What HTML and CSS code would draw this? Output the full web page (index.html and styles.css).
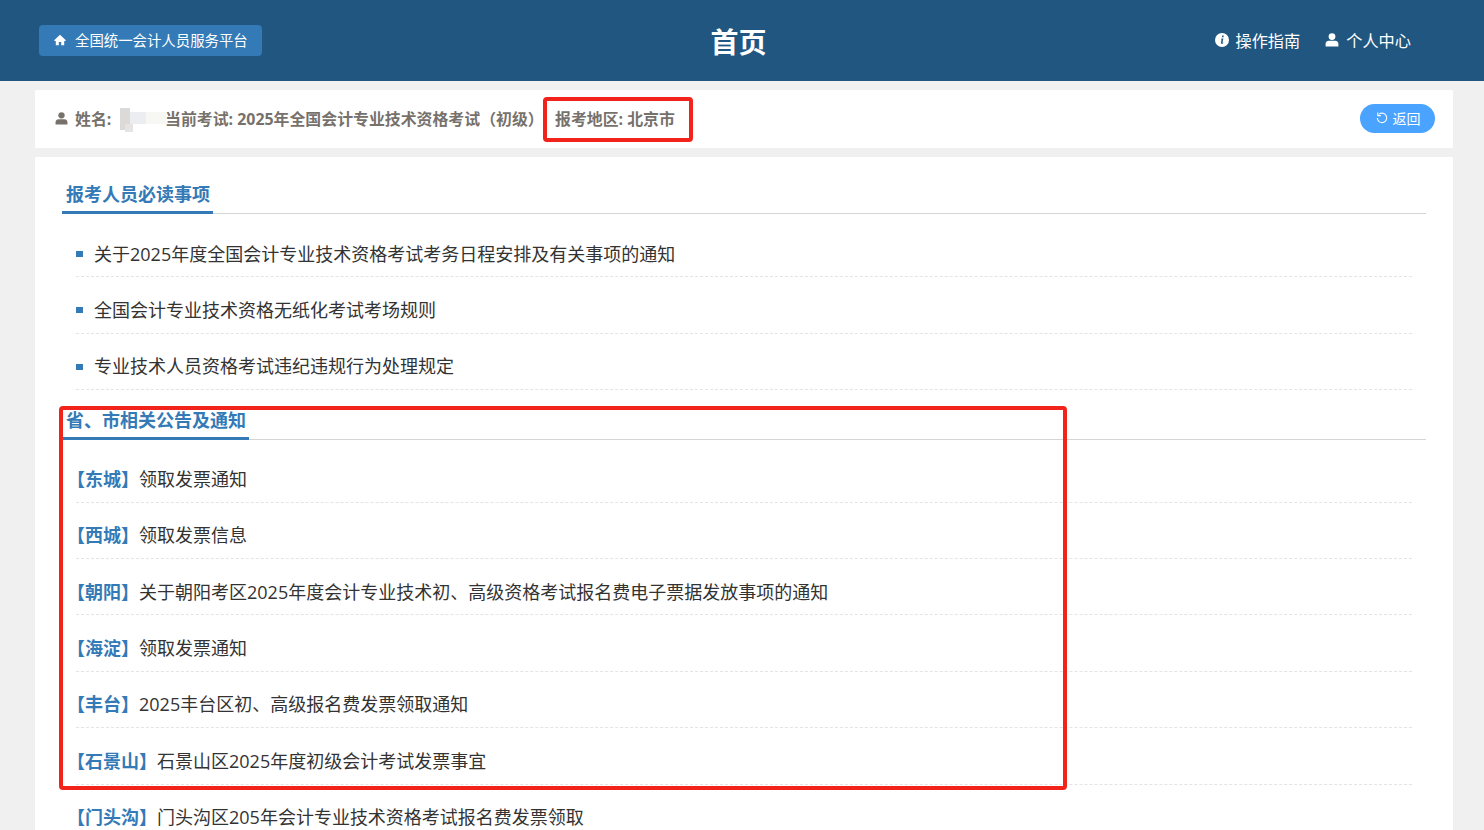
FILE: index.html
```html
<!DOCTYPE html>
<html lang="zh-CN">
<head>
<meta charset="utf-8">
<title>首页</title>
<link rel="stylesheet" href="styles.css">
</head>
<body>
<header class="topbar">
  <a class="home-btn">
    <svg class="icon-home" viewBox="0 0 12 12"><path d="M6 .8 .4 6v1h1.400v4.200h3V8h2.400v3.200h3V7h1.400V6z" fill="#fff"/></svg>
    <span>全国统一会计人员服务平台</span>
  </a>
  <h1 class="page-title">首页</h1>
  <nav class="topnav">
    <a class="nav-item">
      <svg class="icon-info" viewBox="0 0 14 14"><circle cx="7" cy="7" r="7" fill="#fff"/><path d="M7.200 2.600h1.600l-.3 1.600H6.900zM6.500 5.400h1.900l-.9 4.200c0 .3.3.3.8 0l-.1.8c-1 .6-2.400.6-2.300-.6l.7-3.400-.6-.2z" fill="#20567f"/></svg>
      <span>操作指南</span>
    </a>
    <a class="nav-item">
      <svg class="icon-user" viewBox="0 0 14 14"><circle cx="7" cy="3.600" r="3.400" fill="#fff"/><path d="M.6 13.400V11c0-2 1.600-3.200 3.200-3.200h6.400c1.600 0 3.200 1.200 3.200 3.200v2.400z" fill="#fff"/></svg>
      <span>个人中心</span>
    </a>
  </nav>
</header>

<section class="infobar">
  <div class="info-left">
    <svg class="icon-user-small" viewBox="0 0 14 14"><circle cx="7" cy="3.600" r="3.400" fill="#77716c"/><path d="M.6 13.400V11c0-2 1.600-3.200 3.200-3.200h6.400c1.600 0 3.200 1.200 3.200 3.200v2.400z" fill="#77716c"/></svg>
    <span class="info-name">姓名:</span>
    <span class="info-exam">当前考试: 2025年全国会计专业技术资格考试（初级）</span>
    <span class="info-region">报考地区: 北京市</span>
  </div>
  <a class="back-btn">
    <svg class="icon-back" viewBox="0 0 12 12"><path d="M3.200 2.100A4.700 4.700 0 1 1 1.300 6" fill="none" stroke="#fff" stroke-width="1.100"/><path d="M1.800 .6v3h3" fill="none" stroke="#fff" stroke-width="1.100"/></svg>
    <span>返回</span>
  </a>
  <div class="redact">
    <i class="r1"></i><i class="r2"></i><i class="r3"></i><i class="r4"></i>
  </div>
</section>

<main class="content">
  <div class="section-head"><h2>报考人员必读事项</h2></div>
  <ul class="list list-bullets">
    <li>关于2025年度全国会计专业技术资格考试考务日程安排及有关事项的通知</li>
    <li>全国会计专业技术资格无纸化考试考场规则</li>
    <li>专业技术人员资格考试违纪违规行为处理规定</li>
  </ul>
  <div class="section-head section-second"><h2>省、市相关公告及通知</h2></div>
  <ul class="list list-notices">
    <li><b>【东城】</b>领取发票通知</li>
    <li><b>【西城】</b>领取发票信息</li>
    <li><b>【朝阳】</b>关于朝阳考区2025年度会计专业技术初、高级资格考试报名费电子票据发放事项的通知</li>
    <li><b>【海淀】</b>领取发票通知</li>
    <li><b>【丰台】</b>2025丰台区初、高级报名费发票领取通知</li>
    <li><b>【石景山】</b>石景山区2025年度初级会计考试发票事宜</li>
    <li><b>【门头沟】</b>门头沟区205年会计专业技术资格考试报名费发票领取</li>
  </ul>
</main>

<div class="mark mark-region"></div>
<div class="mark mark-notices"></div>
</body>
</html>
```

FILE: styles.css
```css
* { box-sizing: border-box; }
html, body { height: 830px; overflow: hidden; }
body {
  margin: 0;
  position: relative;
  background: #f0f0f0;
  color: #333;
  font-family: "Open Sans", "Noto Sans CJK SC", sans-serif;
}
.topbar {
  height: 81px;
  background: #20567f;
  color: #fff;
  padding: 0 46px 0 39px;
  display: grid;
  grid-template-columns: 1fr auto 1fr;
  align-items: center;
}
.home-btn {
  justify-self: start;
  width: 223px;
  height: 31px;
  margin-bottom: 1px;
  background: #337ab7;
  border-radius: 4px;
  display: flex;
  align-items: center;
  padding-left: 15px;
  padding-bottom: 1px;
  gap: 9px;
  font-size: 14.4px;
}
.icon-home { width: 12px; height: 12px; }
.page-title {
  margin: 3px 0 0;
  font-size: 28px;
  font-weight: 700;
  line-height: 40px;
}
.topnav {
  justify-self: end;
  display: flex;
  gap: 25px;
  font-size: 16.2px;
  margin: 0 27px 2px 0;
}
.nav-item { display: flex; align-items: center; gap: 7px; }
.icon-info, .icon-user { width: 14px; height: 14px; }
.infobar {
  position: relative;
  margin: 9px 31px 0 35px;
  height: 58px;
  background: #fff;
  display: flex;
  align-items: center;
  justify-content: space-between;
  padding: 0 18px 0 20px;
}
.info-left {
  display: flex;
  align-items: center;
  font-size: 15.9px;
  font-weight: 700;
  color: #77716c;
  padding-bottom: 2px;
}
.icon-user-small { width: 13px; height: 13px; margin-right: 7px; }
.info-name { width: 90px; }
.info-exam { width: 390px; white-space: nowrap; }
.back-btn {
  width: 75px;
  height: 29px;
  margin-bottom: 2px;
  padding-left: 1px;
  border-radius: 15px;
  background: #4aa3ff;
  color: #fff;
  font-size: 14px;
  display: flex;
  align-items: center;
  justify-content: center;
  gap: 5px;
}
.icon-back { width: 12px; height: 12px; }
.redact { position: absolute; left: 85px; top: 18px; width: 46px; height: 24px; }
.redact i { position: absolute; display: block; }
.r1 { left: 0; top: 0; width: 10px; height: 22px; background: #dcdad8; }
.r2 { left: 5px; top: 16px; width: 8px; height: 8px; background: #e6e4e2; }
.r3 { left: 10px; top: 4px; width: 16px; height: 12px; background: #ecedf0; }
.r4 { left: 26px; top: 4px; width: 20px; height: 12px; background: #f7f7f4; }
.content {
  margin: 9px 31px 0 35px;
  background: #fff;
  padding: 20px 27px 0;
}
.section-head {
  height: 37px;
  border-bottom: 1px solid #d5d5d5;
}
.section-second { margin-top: 13px; }
.section-head h2 {
  display: inline-block;
  margin: 0;
  height: 37px;
  padding: 0 3px 0 4px;
  border-bottom: 3px solid #337ab7;
  color: #337ab7;
  font-size: 18px;
  font-weight: 700;
  line-height: 34px;
}
.list {
  list-style: none;
  margin: 7px 14px 0;
  padding: 0;
}
.list-notices { margin-top: 6px; }
.list li {
  height: 56.4px;
  display: flex;
  align-items: center;
  border-bottom: 1px dashed #e4e4e4;
  font-size: 18px;
  color: #333;
  white-space: nowrap;
  padding-top: 8px;
}
.list b { color: #337ab7; font-weight: 700; margin-left: -9px; }
.list-bullets li { padding-left: 18px; position: relative; }
.list-bullets li::before {
  content: "";
  position: absolute;
  left: 0;
  top: 30px;
  width: 7px;
  height: 6px;
  background: #337ab7;
}
.mark { position: absolute; border: 4px solid #f2231b; border-radius: 4px; }
.mark-region { left: 543px; top: 97px; width: 150px; height: 45px; }
.mark-notices { left: 59px; top: 406px; width: 1008px; height: 384px; }
```
